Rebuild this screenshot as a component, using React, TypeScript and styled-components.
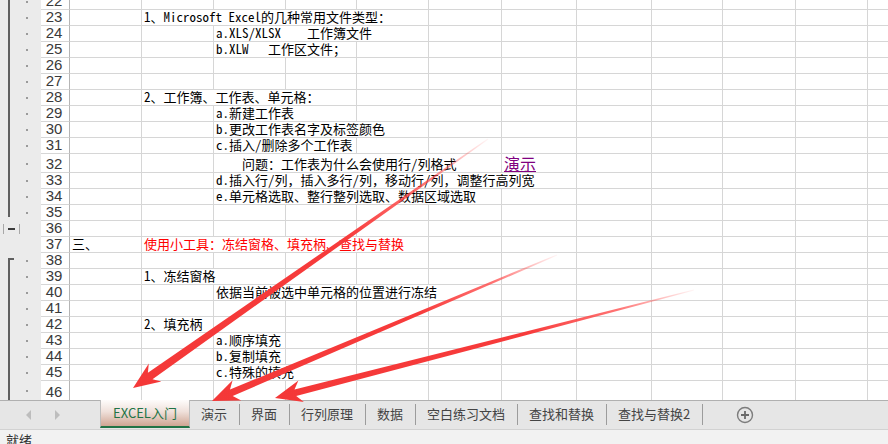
import React from 'react';
import styled, { createGlobalStyle } from 'styled-components';

const GlobalStyle = createGlobalStyle`
  html, body { margin: 0; padding: 0; background: #fff; overflow: hidden; }
  #root { width: 888px; height: 444px; }
  * { box-sizing: border-box; }
`;

const CELL_FONT = `"Noto Sans Mono CJK SC", "Noto Sans CJK SC", monospace`;
const UI_FONT = `"Noto Sans CJK SC", "Noto Sans", sans-serif`;
const COLS = [72, 72, 72, 71, 72, 73, 75, 75, 71, 73, 72, 72];

type Tone = 'plain' | 'red' | 'link';
type CellDef = { col: number; span?: number; text: string; tone?: Tone };
type Outline = 'line' | 'end' | 'button' | 'none' | 'start';
type RowDef = { n: number; h?: number; cells?: CellDef[]; outline: Outline; dot?: boolean };

const ROWS: RowDef[] = [
  { n: 22, outline: 'line', dot: true },
  { n: 23, outline: 'line', dot: true, cells: [{ col: 1, span: 4, text: '1、Microsoft Excel的几种常用文件类型：' }] },
  { n: 24, outline: 'line', dot: true, cells: [{ col: 2, span: 3, text: 'a.XLS/XLSX    工作簿文件' }] },
  { n: 25, outline: 'line', dot: true, cells: [{ col: 2, span: 2, text: 'b.XLW   工作区文件；' }] },
  { n: 26, outline: 'line', dot: true },
  { n: 27, outline: 'line', dot: true },
  { n: 28, outline: 'line', dot: true, cells: [{ col: 1, span: 3, text: '2、工作簿、工作表、单元格：' }] },
  { n: 29, outline: 'line', dot: true, cells: [{ col: 2, span: 2, text: 'a.新建工作表' }] },
  { n: 30, outline: 'line', dot: true, cells: [{ col: 2, span: 3, text: 'b.更改工作表名字及标签颜色' }] },
  { n: 31, outline: 'line', dot: true, cells: [{ col: 2, span: 2, text: 'c.插入/删除多个工作表' }] },
  {
    n: 32, h: 19, outline: 'line', dot: true, cells: [
      { col: 2, span: 4, text: '    问题：工作表为什么会使用行/列格式' },
      { col: 6, span: 1, text: '演示', tone: 'link' },
    ],
  },
  { n: 33, outline: 'line', dot: true, cells: [{ col: 2, span: 5, text: 'd.插入行/列，插入多行/列，移动行/列，调整行高列宽' }] },
  { n: 34, outline: 'line', dot: true, cells: [{ col: 2, span: 4, text: 'e.单元格选取、整行整列选取、数据区域选取' }] },
  { n: 35, outline: 'end', dot: true },
  { n: 36, outline: 'button' },
  {
    n: 37, outline: 'none', cells: [
      { col: 0, span: 1, text: '三、' },
      { col: 1, span: 4, text: '使用小工具：冻结窗格、填充柄、查找与替换', tone: 'red' },
    ],
  },
  { n: 38, outline: 'start', dot: true },
  { n: 39, outline: 'line', dot: true, cells: [{ col: 1, span: 2, text: '1、冻结窗格' }] },
  { n: 40, outline: 'line', dot: true, cells: [{ col: 2, span: 4, text: '依据当前被选中单元格的位置进行冻结' }] },
  { n: 41, outline: 'line', dot: true },
  { n: 42, outline: 'line', dot: true, cells: [{ col: 1, span: 1, text: '2、填充柄' }] },
  { n: 43, outline: 'line', dot: true, cells: [{ col: 2, span: 1, text: 'a.顺序填充' }] },
  { n: 44, outline: 'line', dot: true, cells: [{ col: 2, span: 1, text: 'b.复制填充' }] },
  { n: 45, outline: 'line', dot: true, cells: [{ col: 2, span: 2, text: 'c.特殊的填充' }] },
  { n: 46, h: 20, outline: 'line', dot: true },
];

const TABS = ['演示', '界面', '行列原理', '数据', '空白练习文档', '查找和替换', '查找与替换2'];

const Page = styled.div`
  position: relative;
  width: 888px;
  height: 444px;
  overflow: hidden;
  display: flex;
  flex-direction: column;
  background: #fff;
`;

const Sheet = styled.div`
  height: 400px;
  flex: none;
  overflow: hidden;
`;

const Rows = styled.div`
  margin-top: -6px;
  display: flex;
  flex-direction: column;
`;

const Row = styled.div<{ $h: number }>`
  display: flex;
  height: ${(p) => p.$h}px;
  flex: none;
`;

const Gutter = styled.div`
  width: 41px;
  flex: none;
  display: flex;
  background: #ebebeb;
`;

const TrackSlot = styled.div<{ $pad: number }>`
  width: 22px;
  flex: none;
  display: flex;
  padding-left: ${(p) => p.$pad}px;
`;

const Track = styled.div<{ $mode: Outline }>`
  width: ${(p) => (p.$mode === 'start' ? 6 : 2)}px;
  flex: none;
  background: ${(p) => (p.$mode === 'start' ? 'transparent' : '#5f5f5f')};
  border-left: ${(p) => (p.$mode === 'start' ? '2px solid #5f5f5f' : 'none')};
  border-top: ${(p) => (p.$mode === 'start' ? '2px solid #5f5f5f' : 'none')};
  margin-top: ${(p) => (p.$mode === 'start' ? 5 : 0)}px;
  margin-bottom: ${(p) => (p.$mode === 'end' ? 4 : 0)}px;
`;

const OutlineButton = styled.div`
  width: 17px;
  height: 10px;
  align-self: center;
  border-left: 1px solid #a8a8a8;
  border-right: 1px solid #a8a8a8;
  display: flex;
  align-items: center;
  justify-content: center;
  &::before {
    content: '';
    width: 7px;
    height: 2px;
    background: #3c3c3c;
  }
`;

const DotSlot = styled.div`
  flex: 1;
  display: flex;
  align-items: center;
  padding-left: 4px;
`;

const Dot = styled.span`
  width: 2px;
  height: 2px;
  background: #9a9a9a;
`;

const RowHeader = styled.div`
  width: 29px;
  flex: none;
  border-right: 1px solid #b5b5b5;
  border-bottom: 1px solid #d6d6d6;
  background: #fff;
  display: flex;
  align-items: flex-end;
  justify-content: center;
  padding-bottom: 1px;
  padding-right: 2px;
  font-family: "Liberation Sans", Arial, sans-serif;
  font-size: 15px;
  line-height: 15px;
  color: #3a3a3a;
`;

const Cell = styled.div<{ $w: number; $tone: Tone }>`
  width: ${(p) => p.$w}px;
  flex: none;
  border-right: 1px solid #d6d6d6;
  border-bottom: 1px solid #d6d6d6;
  display: flex;
  align-items: flex-end;
  padding-left: 2px;
  padding-bottom: ${(p) => (p.$tone === 'link' ? 0 : 1)}px;
  white-space: pre;
  overflow: visible;
  font-family: ${CELL_FONT};
  font-size: ${(p) => (p.$tone === 'link' ? 16 : 13)}px;
  line-height: ${(p) => (p.$tone === 'link' ? 17 : 14)}px;
  color: ${(p) => (p.$tone === 'red' ? '#ff0000' : p.$tone === 'link' ? '#800080' : '#000')};
  text-decoration: ${(p) => (p.$tone === 'link' ? 'underline' : 'none')};
`;

const TabBar = styled.div`
  height: 29px;
  flex: none;
  display: flex;
  align-items: stretch;
  background: #e6e6e6;
  border-top: 1px solid #b0b0b0;
  font-family: ${UI_FONT};
  font-size: 13px;
  color: #444;
`;

const Nav = styled.div`
  width: 100px;
  flex: none;
  display: flex;
  align-items: center;
  padding-left: 26px;
  gap: 22px;
`;

const ActiveTab = styled.div`
  width: 90px;
  flex: none;
  margin-top: -1px;
  margin-bottom: 1px;
  border-left: 1px solid #bdbdbd;
  border-right: 1px solid #bdbdbd;
  border-bottom: 2px solid #217346;
  background: linear-gradient(#fefcfb 0%, #efe0da 45%, #cfa593 100%);
  color: #217346;
  display: flex;
  align-items: center;
  justify-content: center;
  padding-bottom: 2px;
`;

const Tab = styled.div`
  flex: none;
  display: flex;
  align-items: center;
  padding: 0 12px 3px 11px;
`;

const Separator = styled.div`
  width: 1px;
  height: 21px;
  flex: none;
  align-self: center;
  margin-top: -1px;
  background: #9c9c9c;
`;

const AddButton = styled.div`
  margin-left: 33px;
  display: flex;
  align-items: center;
  padding-bottom: 1px;
`;

const StatusBar = styled.div`
  height: 22px;
  flex: none;
  border-top: 1px solid #d2d2d2;
  background: #f2f2f2;
  padding: 1px 0 0 6px;
  font-family: ${UI_FONT};
  font-size: 13px;
  line-height: 18px;
  color: #333;
`;

const Overlay = styled.svg`
  position: absolute;
  left: 0;
  top: 0;
  width: 888px;
  height: 444px;
  pointer-events: none;
`;

type ArrowDef = { id: string; tip: [number, number]; tail: [number, number]; shaft: number };

const ARROWS: ArrowDef[] = [
  { id: 'a1', tip: [133, 388], tail: [488, 139], shaft: 8 },
  { id: 'a2', tip: [212, 401], tail: [557, 255], shaft: 7 },
  { id: 'a3', tip: [275, 398], tail: [694, 290], shaft: 7 },
];

function arrowPoints(a: ArrowDef): string {
  const [tx, ty] = a.tip;
  const [sx, sy] = a.tail;
  const dx = sx - tx;
  const dy = sy - ty;
  const L = Math.hypot(dx, dy);
  const ux = dx / L;
  const uy = dy / L;
  const nx = -uy;
  const ny = ux;
  const headLen = 27;
  const hw = 11;
  const bx = tx + ux * headLen;
  const by = ty + uy * headLen;
  const cx = tx + ux * (headLen - 6);
  const cy = ty + uy * (headLen - 6);
  const s = a.shaft / 2;
  const pts: [number, number][] = [
    [tx, ty],
    [bx + nx * hw, by + ny * hw],
    [cx + nx * s, cy + ny * s],
    [sx + nx * 0.6, sy + ny * 0.6],
    [sx - nx * 0.6, sy - ny * 0.6],
    [cx - nx * s, cy - ny * s],
    [bx - nx * hw, by - ny * hw],
  ];
  return pts.map((p) => `${p[0].toFixed(1)},${p[1].toFixed(1)}`).join(' ');
}

function Arrows() {
  return (
    <Overlay viewBox="0 0 888 444">
      <defs>
        {ARROWS.map((a) => (
          <linearGradient
            key={a.id}
            id={`g-${a.id}`}
            gradientUnits="userSpaceOnUse"
            x1={a.tail[0]}
            y1={a.tail[1]}
            x2={a.tip[0]}
            y2={a.tip[1]}
          >
            <stop offset="0" stopColor="#ff4a4a" stopOpacity="0.05" />
            <stop offset="0.18" stopColor="#ff4545" stopOpacity="0.75" />
            <stop offset="0.4" stopColor="#f73b3b" stopOpacity="1" />
            <stop offset="1" stopColor="#f43838" stopOpacity="1" />
          </linearGradient>
        ))}
      </defs>
      {ARROWS.map((a) => (
        <polygon key={a.id} points={arrowPoints(a)} fill={`url(#g-${a.id})`} />
      ))}
    </Overlay>
  );
}

function GutterCell({ row }: { row: RowDef }) {
  return (
    <Gutter>
      {row.outline === 'button' ? (
        <TrackSlot $pad={3}>
          <OutlineButton />
        </TrackSlot>
      ) : (
        <TrackSlot $pad={8}>{row.outline !== 'none' && <Track $mode={row.outline} />}</TrackSlot>
      )}
      <DotSlot>{row.dot && <Dot />}</DotSlot>
    </Gutter>
  );
}

function SheetRow({ row }: { row: RowDef }) {
  const cells: React.ReactNode[] = [];
  let c = 0;
  while (c < COLS.length) {
    const def = row.cells?.find((d) => d.col === c);
    const span = def?.span ?? 1;
    let w = 0;
    for (let i = c; i < Math.min(c + span, COLS.length); i++) w += COLS[i];
    cells.push(
      <Cell key={c} $w={w} $tone={def?.tone ?? 'plain'}>
        {def?.text ?? ''}
      </Cell>
    );
    c += span;
  }
  return (
    <Row $h={row.h ?? 16}>
      <GutterCell row={row} />
      <RowHeader>{row.n}</RowHeader>
      {cells}
    </Row>
  );
}

function NavArrow({ dir }: { dir: 'left' | 'right' }) {
  return (
    <svg width="6" height="10" viewBox="0 0 6 10">
      <polygon points={dir === 'left' ? '5,0 5,10 0,5' : '1,0 1,10 6,5'} fill="#bdbdbd" />
    </svg>
  );
}

export default function App() {
  return (
    <>
      <GlobalStyle />
      <Page>
        <Sheet>
          <Rows>
            {ROWS.map((r) => (
              <SheetRow key={r.n} row={r} />
            ))}
          </Rows>
        </Sheet>
        <TabBar>
          <Nav>
            <NavArrow dir="left" />
            <NavArrow dir="right" />
          </Nav>
          <ActiveTab>EXCEL入门</ActiveTab>
          {TABS.map((t) => (
            <React.Fragment key={t}>
              <Tab>{t}</Tab>
              <Separator />
            </React.Fragment>
          ))}
          <AddButton>
            <svg width="18" height="18" viewBox="0 0 18 18">
              <circle cx="9" cy="9" r="7.5" fill="none" stroke="#7c7c7c" strokeWidth="1.4" />
              <path d="M9 5v8M5 9h8" stroke="#6a6a6a" strokeWidth="1.8" />
            </svg>
          </AddButton>
        </TabBar>
        <StatusBar>就绪</StatusBar>
        <Arrows />
      </Page>
    </>
  );
}
